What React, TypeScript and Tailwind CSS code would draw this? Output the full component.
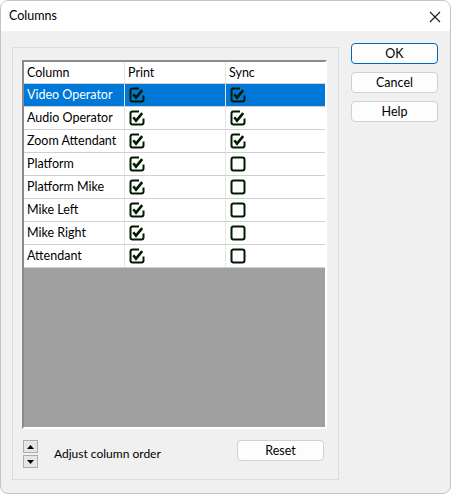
import React from "react";

const rows = [
  { name: "Video Operator", print: true, sync: true },
  { name: "Audio Operator", print: true, sync: true },
  { name: "Zoom Attendant", print: true, sync: true },
  { name: "Platform", print: true, sync: false },
  { name: "Platform Mike", print: true, sync: false },
  { name: "Mike Left", print: true, sync: false },
  { name: "Mike Right", print: true, sync: false },
  { name: "Attendant", print: true, sync: false },
];

const Check = ({ on }: { on: boolean }) => (
  <svg width="16" height="16" viewBox="0 0 16 16" className="block">
    {on ? (
      <>
        <path
          d="M10 1.5 H3.5 Q1.5 1.5 1.5 3.5 V12.5 Q1.5 14.5 3.5 14.5 H12.5 Q14.5 14.5 14.5 12.5 V8.5"
          fill="none"
          stroke="#001a00"
          strokeWidth="2"
        />
        <path d="M4.3 7.3 L7 10.6 L13.2 3.2" fill="none" stroke="#001a00" strokeWidth="2.6" />
      </>
    ) : (
      <rect x="1.5" y="1.5" width="13" height="13" rx="2" fill="none" stroke="#001a00" strokeWidth="2" />
    )}
  </svg>
);

const Btn = ({ label, focus }: { label: string; focus?: boolean }) => (
  <div
    className={
      "h-[21px] w-[87px] rounded-[4px] border bg-[#fdfdfd] flex items-center justify-center text-[12.5px] text-black pt-px " +
      (focus ? "border-[#0067c0]" : "border-[#d0d0d0]")
    }
  >
    {label}
  </div>
);

export default function App() {
  return (
    <div
      className="w-[451px] h-[494px] rounded-[8px] border border-[#c4c4c4] bg-[#f0f0f0] overflow-hidden flex flex-col text-black"
      style={{ fontFamily: "Lato, 'Noto Sans', sans-serif" }}
    >
      {/* title bar */}
      <div className="h-[30px] bg-white flex items-center justify-between pl-[8px] pr-[9px] pt-px shrink-0">
        <span className="text-[12.5px]">Columns</span>
        <svg width="12" height="12" viewBox="0 0 12 12">
          <path d="M1 1 L11 11 M11 1 L1 11" stroke="#1a1a1a" strokeWidth="1.1" />
        </svg>
      </div>

      <div className="flex pl-[11px] pt-[16px]">
        {/* group box */}
        <div className="w-[327px] h-[433px] border border-[#dcdcdc] pl-[9px] pt-[12px] flex flex-col">
          {/* list view */}
          <div className="w-[305px] h-[369px] border-t-2 border-l-2 border-t-[#8a8a8a] border-l-[#8a8a8a] border-b-2 border-r-2 border-b-white border-r-white bg-[#a0a0a0] flex flex-col text-[12.5px]">
            <div className="h-[22px] bg-white flex border-b border-[#d0d0d0] items-center">
              <div className="w-[101px] h-full border-r border-[#e4e4e4] pl-[3px] pt-[2px] flex items-center">Column</div>
              <div className="w-[101px] h-full border-r border-[#e4e4e4] pl-[3px] pt-[2px] flex items-center">Print</div>
              <div className="flex-1 pl-[3px] pt-[2px] flex items-center">Sync</div>
            </div>
            {rows.map((r, i) => (
              <div
                key={r.name}
                className={
                  "h-[23px] flex border-b border-[#d0d0d0] " +
                  (i === 0 ? "bg-[#0078d7] text-white" : "bg-white")
                }
              >
                <div className="w-[101px] h-full border-r border-[#e4e4e4] pl-[3px] pt-px flex items-center whitespace-nowrap">{r.name}</div>
                <div className="w-[101px] h-full border-r border-[#e4e4e4] pl-[4px] flex items-center">
                  <Check on={r.print} />
                </div>
                <div className="flex-1 pl-[4px] flex items-center">
                  <Check on={r.sync} />
                </div>
              </div>
            ))}
          </div>

          {/* bottom controls */}
          <div className="flex items-start mt-[11px]">
            <div className="flex flex-col gap-[2px] ml-[1px]">
              <div className="w-[15px] h-[13px] border border-[#adadad] bg-[#e5e5e5] flex items-center justify-center">
                <svg width="7" height="4" viewBox="0 0 7 4"><path d="M0 4 L3.5 0 L7 4 Z" fill="#000" /></svg>
              </div>
              <div className="w-[15px] h-[13px] border border-[#adadad] bg-[#e5e5e5] flex items-center justify-center">
                <svg width="7" height="4" viewBox="0 0 7 4"><path d="M0 0 L3.5 4 L7 0 Z" fill="#000" /></svg>
              </div>
            </div>
            <div className="text-[12px] ml-[16px] mt-[5px] w-[183px]">Adjust column order</div>
            <Btn label="Reset" />
          </div>
        </div>

        {/* right buttons */}
        <div className="flex flex-col gap-[8px] ml-[12px] -mt-[4px]">
          <Btn label="OK" focus />
          <Btn label="Cancel" />
          <Btn label="Help" />
        </div>
      </div>
    </div>
  );
}
